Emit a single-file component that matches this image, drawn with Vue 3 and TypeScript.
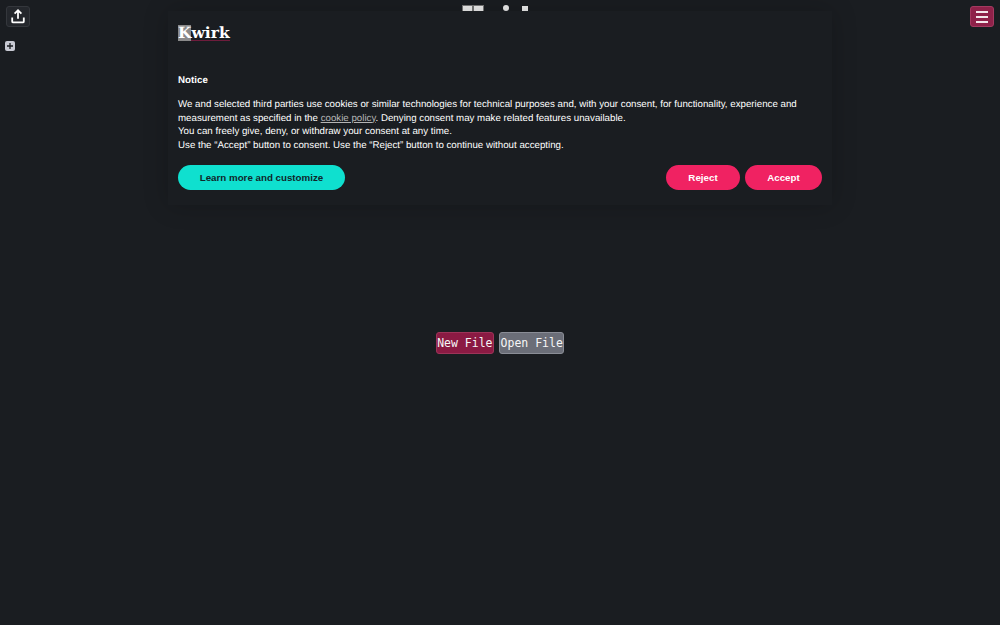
<script setup lang="ts">
const noticeLines: string[] = [
  "You can freely give, deny, or withdraw your consent at any time.",
  "Use the “Accept” button to consent. Use the “Reject” button to continue without accepting.",
];
</script>

<template>
  <div class="page">
    <header class="topbar">
      <div class="left-tools">
        <button class="icon-btn share" aria-label="Upload">
          <svg width="14" height="15" viewBox="0 0 14 15" fill="none" stroke="#fff" stroke-width="1.8">
            <path d="M7 9.8V1.6M3.6 4.7 7 1.3l3.4 3.4" />
            <path d="M1.2 8.4v4c0 .6.4 1 1 1h9.6c.6 0 1-.4 1-1v-4" />
          </svg>
        </button>
        <button class="add-btn" aria-label="Add">
          <svg width="6" height="6" viewBox="0 0 6 6" stroke="#1a1d21" stroke-width="1.3">
            <path d="M3 0v6M0 3h6" />
          </svg>
        </button>
      </div>
      <div class="peek">
        <span class="peek-key"></span>
        <span class="peek-key"></span>
        <span class="peek-dot"></span>
        <span class="peek-tab"></span>
      </div>
      <button class="icon-btn menu" aria-label="Menu">
        <span></span><span></span><span></span>
      </button>
    </header>

    <main class="center">
      <button class="file-btn new">New File</button>
      <button class="file-btn open">Open File</button>
    </main>

    <section class="notice">
      <div class="logo"><span class="logo-k">K</span><span class="logo-rest">wirk</span></div>
      <h2>Notice</h2>
      <p>
        We and selected third parties use cookies or similar technologies for technical purposes and, with your consent, for functionality, experience and<br />
        measurement as specified in the <a href="#">cookie policy</a>. Denying consent may make related features unavailable.
        <template v-for="line in noticeLines" :key="line"><br />{{ line }}</template>
      </p>
      <div class="actions">
        <button class="pill teal">Learn more and customize</button>
        <div class="right-actions">
          <button class="pill pink reject">Reject</button>
          <button class="pill pink accept">Accept</button>
        </div>
      </div>
    </section>
  </div>
</template>

<style>
html,
body {
  margin: 0;
  background: #1a1d21;
}
</style>

<style scoped>
.page {
  position: relative;
  display: flex;
  flex-direction: column;
  height: 625px;
  overflow: hidden;
  background: #1a1d21;
  text-rendering: geometricPrecision;
}
.topbar {
  display: flex;
  justify-content: space-between;
  align-items: flex-start;
  height: 54px;
  padding: 6px 6px 0 6px;
  box-sizing: border-box;
}
.left-tools {
  display: flex;
  flex-direction: column;
  align-items: flex-start;
  gap: 14px;
}
.icon-btn {
  display: flex;
  flex-direction: column;
  align-items: center;
  justify-content: center;
  width: 24px;
  height: 21px;
  padding: 0;
  border-radius: 3px;
}
.share {
  background: #24272c;
  border: 1px solid #34373c;
}
.add-btn {
  display: flex;
  align-items: center;
  justify-content: center;
  width: 10px;
  height: 10px;
  margin-left: -1px;
  padding: 0;
  border: none;
  border-radius: 2px;
  background: #c8cad4;
}
.peek {
  display: flex;
  align-items: flex-start;
  padding-right: 10px;
}
.peek-key {
  width: 9px;
  height: 5px;
  margin-top: -1px;
  background: #eee;
  border: 1px solid #777;
}
.peek-dot {
  width: 6px;
  height: 6px;
  margin: -1px 0 0 19px;
  border-radius: 50%;
  background: #eee;
}
.peek-tab {
  width: 6px;
  height: 5px;
  margin-left: 13px;
  background: #eee;
}
.menu {
  gap: 3px;
  background: #8f2149;
  border: 1px solid #a33a60;
}
.menu span {
  display: block;
  width: 12px;
  height: 2px;
  background: #f3e6ea;
}
.center {
  flex: 1;
  display: flex;
  justify-content: center;
  align-items: center;
  gap: 5px;
  padding-top: 7px;
}
.file-btn {
  height: 22px;
  padding: 0 0.5px;
  font-family: "DejaVu Sans Mono", monospace;
  font-size: 11.5px;
  color: #f6f6f6;
  border-radius: 3px;
}
.new {
  background: #8b1a43;
  border: 1px solid #9d3358;
}
.open {
  background: #6b6e78;
  border: 1px solid #8a8d96;
}
.notice {
  position: absolute;
  top: 11px;
  left: 168px;
  width: 664px;
  height: 194px;
  box-sizing: border-box;
  padding: 14px 10px 0;
  background: #1a1d21;
  box-shadow: 0 0 24px rgba(0, 0, 0, 0.2);
  font-family: "Liberation Sans", Arial, sans-serif;
  color: #fff;
}
.logo {
  display: flex;
  height: 16px;
  font-family: "DejaVu Serif", serif;
  font-weight: bold;
  font-size: 15.5px;
  line-height: 16px;
  color: #fff;
}
.logo-k {
  background: #8a8a8a;
}
.logo-rest {
  border-bottom: 1px solid #6e1c3c;
  height: 15px;
}
h2 {
  margin: 33px 0 0;
  font-size: 9.75px;
  line-height: 14px;
  font-weight: bold;
}
p {
  margin: 10px 0 0;
  font-size: 9.72px;
  line-height: 13.6px;
  white-space: nowrap;
}
p a {
  color: #b5b5b5;
}
.actions {
  display: flex;
  justify-content: space-between;
  margin-top: 13px;
}
.right-actions {
  display: flex;
  gap: 5px;
}
.pill {
  height: 25px;
  padding: 0;
  border: none;
  border-radius: 13px;
  font-family: "Liberation Sans", Arial, sans-serif;
  font-size: 9.75px;
  font-weight: bold;
}
.teal {
  width: 167px;
  background: #0fe0cf;
  color: #10262a;
}
.pink {
  background: #f02262;
  color: #fff;
}
.reject {
  width: 74px;
}
.accept {
  width: 77px;
}
</style>
